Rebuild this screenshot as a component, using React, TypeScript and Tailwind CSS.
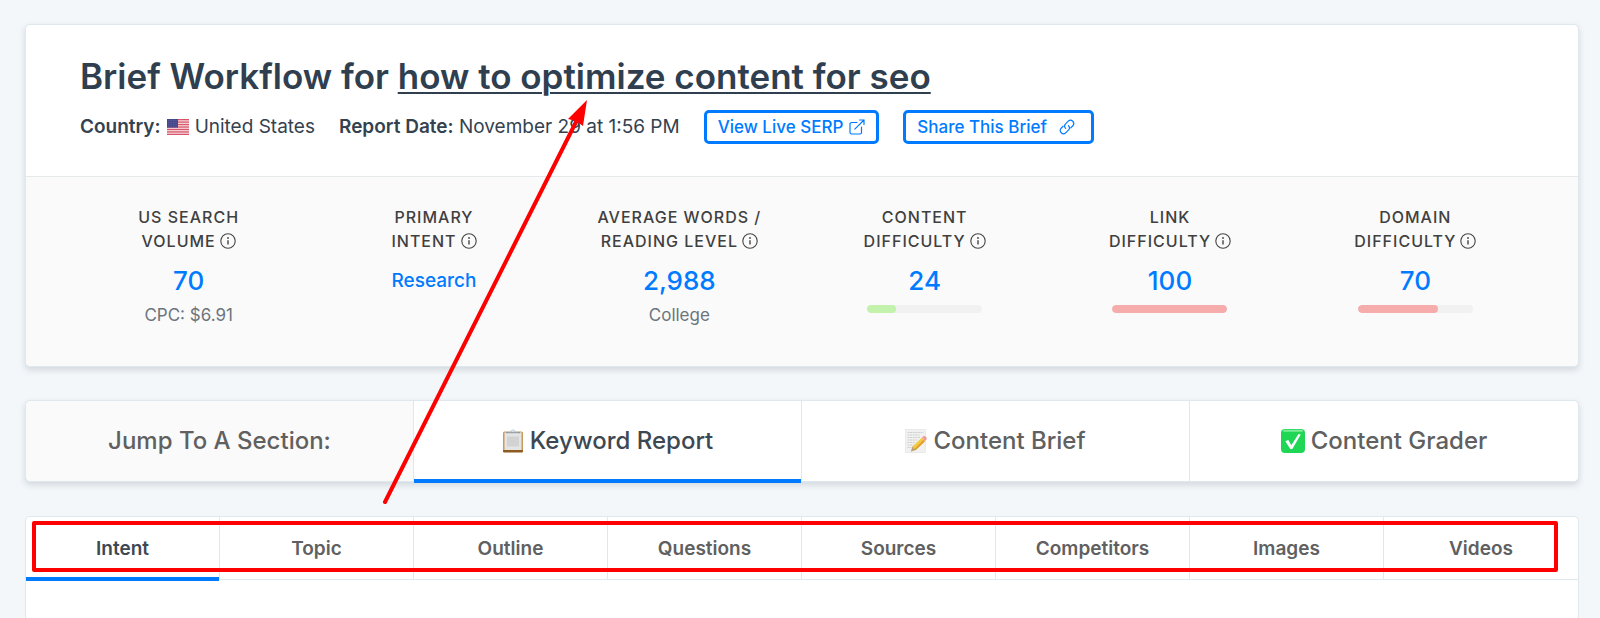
import type { ReactNode } from 'react';

type Stat = {
  label: [string, string];
  value: string;
  small?: boolean;
  note?: string;
  bar?: { percent: number; color: string };
};

const stats: Stat[] = [
  { label: ['US Search', 'Volume'], value: '70', note: 'CPC: $6.91' },
  { label: ['Primary', 'Intent'], value: 'Research', small: true },
  { label: ['Average Words /', 'Reading Level'], value: '2,988', note: 'College' },
  { label: ['Content', 'Difficulty'], value: '24', bar: { percent: 25, color: 'bg-[#c3f2ac]' } },
  { label: ['Link', 'Difficulty'], value: '100', bar: { percent: 100, color: 'bg-[#f7acac]' } },
  { label: ['Domain', 'Difficulty'], value: '70', bar: { percent: 70, color: 'bg-[#f7acac]' } },
];

const sections = ['Intent', 'Topic', 'Outline', 'Questions', 'Sources', 'Competitors', 'Images', 'Videos'];

function InfoIcon() {
  return (
    <svg viewBox="0 0 16 16" className="inline-block size-4 -mt-1 ml-1" fill="none" stroke="#444" strokeWidth="1.1">
      <circle cx="8" cy="8" r="7.2" />
      <path d="M8 7.2v4.2" strokeWidth="1.4" />
      <circle cx="8" cy="5" r="0.9" fill="#444" stroke="none" />
    </svg>
  );
}

function FlagIcon() {
  return (
    <svg viewBox="0 0 22 16" className="h-4 w-[22px]">
      <rect width="22" height="16" fill="#f6dfe2" />
      {[0, 1, 2, 3, 4, 5, 6].map((i) => (
        <rect key={i} y={i * 2.46} width="22" height="1.3" fill="#d9566a" />
      ))}
      <rect width="11" height="8.6" fill="#45488a" />
      {[1.5, 3.4, 5.3, 7.2].map((y) => (
        <path key={y} d={`M1 ${y}h9.5`} stroke="#6f73a8" strokeWidth="0.6" strokeDasharray="0.7 1" />
      ))}
    </svg>
  );
}

function ExternalIcon() {
  return (
    <svg viewBox="0 0 16 16" className="size-4" fill="none" stroke="currentColor" strokeWidth="1.2" strokeLinecap="round" strokeLinejoin="round">
      <path d="M8 3.500H2.600c-.9 0-1.600.7-1.600 1.500v8.500c0 .9.7 1.500 1.500 1.500H11c.9 0 1.500-.7 1.500-1.500V8" />
      <path d="M10.500 1H15v4.500M15 1 5.800 10.200" />
    </svg>
  );
}

function LinkIcon() {
  return (
    <svg viewBox="0 0 16 16" className="size-4" fill="none" stroke="currentColor" strokeWidth="1.2" strokeLinecap="round">
      <path d="M6.600 9.400a3.300 3.300 0 0 1 0-4.600l2.900-2.900a3.300 3.300 0 0 1 4.600 4.600l-2.300 2.300" />
      <path d="M9.400 6.600a3.300 3.300 0 0 1 0 4.600l-2.900 2.900a3.300 3.300 0 0 1-4.600-4.600l2.300-2.300" />
    </svg>
  );
}

function ClipboardIcon() {
  return (
    <svg viewBox="0 0 22 24" className="h-6 w-[22px]">
      <rect x="1" y="2.500" width="20" height="20.500" rx="1.500" fill="#c99a5b" />
      <rect x="1" y="21" width="20" height="2.500" rx="1" fill="#8d5a20" />
      <rect x="2.500" y="3.500" width="17" height="17.500" fill="#e4e4e4" />
      <rect x="5" y="7.500" width="12" height="10" fill="#d2d2d2" />
      <path d="M4 3h14v1.200H4z" fill="#8f969c" />
      <path d="M6 3.200c0-.8 1.200-1.200 2.800-1.200.6-2 3.800-2 4.400 0 1.600 0 2.800.4 2.800 1.200z" fill="#c3cdd6" />
      <circle cx="11" cy="1.900" r="0.700" fill="#fff" />
    </svg>
  );
}

function MemoIcon() {
  return (
    <svg viewBox="0 0 22 24" className="h-6 w-[22px]">
      <rect x="0.500" y="0.500" width="20" height="23" fill="#f1f1f0" stroke="#e2e2e2" strokeWidth="0.600" />
      <path d="M2.500 3.500h16M2.500 6h12M2.500 8.500h13M2.500 11h10M2.500 13.500h8M2.500 16h6M2.500 18.500h4" stroke="#c6c6c6" strokeWidth="0.800" strokeDasharray="2 0.600" />
      <path d="m6 22.500 1.500-5L17 8.500l3 3.500-9.500 9z" fill="#f6c944" />
      <path d="m9 20.500 9.500-9.500 1.500 1.200-9.500 9z" fill="#dd9c26" />
      <path d="m6 22.500 1.500-5 3 3.500z" fill="#b9a27c" />
      <path d="m17 8.500 1.500-1.300c1.500-.8 4 1.500 3 3.300L20 12z" fill="#f09a9c" />
    </svg>
  );
}

function CheckIcon() {
  return (
    <svg viewBox="0 0 24 24" className="size-6">
      <rect width="24" height="24" rx="4" fill="#1fd655" />
      <path d="M3 1.800h18" stroke="#7deb98" strokeWidth="2" strokeLinecap="round" />
      <path d="M4.300 12.200 7.300 11l3 5.300L17.500 5l2.300.6L11.300 20h-2z" fill="#fff" />
    </svg>
  );
}

function MainTab({ icon, children, active }: { icon: ReactNode; children: ReactNode; active?: boolean }) {
  return (
    <button
      type="button"
      className={
        active
          ? 'relative flex items-center justify-center gap-1.5 border-r border-[#dfe8ec] text-[#3d4852] after:absolute after:inset-x-0 after:-bottom-0.5 after:h-1 after:bg-[#007bff]'
          : 'flex items-center justify-center gap-1.5 border-r border-[#dfe8ec] text-[#606060] last:border-r-0'
      }
    >
      {icon}
      {children}
    </button>
  );
}

export default function App() {
  return (
    <div className="relative flex min-h-screen flex-col overflow-hidden bg-[#f3f7fa] pt-6 pr-[21px] pl-[25px] font-['Inter',sans-serif]">
      <section className="rounded-[5px] border border-[#dfe8ec] bg-white shadow-[0_3px_6px_rgba(60,80,90,0.18)]">
        <header className="border-b border-[#e6e9ea] px-[54px] pt-[27px] pb-8">
          <h1 className="text-[35px] leading-12 font-semibold text-[#2f3f50]">
            Brief Workflow for <span className="underline decoration-2 underline-offset-3">how to optimize content for seo</span>
          </h1>
          <div className="mt-2.5 flex items-center gap-6 text-[19px] leading-8 text-[#34424f]">
            <p className="flex items-center gap-1.5">
              <strong className="font-semibold">Country:</strong>
              <FlagIcon />
              United States
            </p>
            <p>
              <strong className="font-semibold">Report Date:</strong> November 29 at 1:56 PM
            </p>
            <a href="#serp" className="flex h-[34px] items-center gap-1.5 rounded-[5px] border-[3px] border-[#007bff] px-[11px] text-[17px] font-medium text-[#007bff]">
              View Live SERP <ExternalIcon />
            </a>
            <button type="button" className="flex h-[34px] items-center gap-3 rounded-[5px] border-[3px] border-[#007bff] pr-4 pl-[11px] text-[17px] font-medium text-[#007bff]">
              Share This Brief <LinkIcon />
            </button>
          </div>
        </header>
        <div className="grid grid-cols-6 rounded-b-[5px] bg-[#fafafa] px-10 pt-7 pb-[37px] text-center">
          {stats.map((stat) => (
            <div key={stat.label.join(' ')}>
              <h2 className="text-base leading-6 font-medium tracking-[1px] text-[#404040] uppercase">
                {stat.label[0]}
                <br />
                {stat.label[1]}
                <InfoIcon />
              </h2>
              <p className={stat.small ? 'mt-3 text-[19px] leading-8 font-medium text-[#007bff]' : 'mt-3 text-[26px] leading-8 font-medium text-[#007bff]'}>
                {stat.value}
              </p>
              {stat.note && <p className="mt-1 text-[17px] leading-7 text-[#6c757d]">{stat.note}</p>}
              {stat.bar && (
                <div className="mx-auto mt-2 h-2 w-[115px] overflow-hidden rounded-full bg-[#f1f1f1]">
                  <div className={`h-full rounded-full ${stat.bar.color}`} style={{ width: `${stat.bar.percent}%` }} />
                </div>
              )}
            </div>
          ))}
        </div>
      </section>

      <nav className="mt-[33px] grid h-[82px] grid-cols-4 rounded-[5px] border border-[#dfe8ec] bg-white text-2xl font-medium shadow-[0_3px_6px_rgba(60,80,90,0.18)]">
        <div className="flex items-center justify-center rounded-l-[5px] border-r border-[#dfe8ec] bg-[#fafafa] text-[#606060]">
          Jump To A Section:
        </div>
        <MainTab icon={<ClipboardIcon />} active>
          Keyword Report
        </MainTab>
        <MainTab icon={<MemoIcon />}>Content Brief</MainTab>
        <MainTab icon={<CheckIcon />}>Content Grader</MainTab>
      </nav>

      <section className="mt-[34px] flex-1 rounded-t-[5px] border border-b-0 border-[#dfe8ec] bg-white">
        <nav className="grid h-[63px] grid-cols-8 border-b border-[#dfe8ec] text-[19px] font-semibold">
          {sections.map((name, i) => (
            <button
              key={name}
              type="button"
              className={
                i === 0
                  ? 'relative border-r border-[#dfe8ec] pt-0.5 text-[#3d4852] after:absolute after:inset-x-0 after:-bottom-0.5 after:h-1 after:bg-[#007bff]'
                  : 'border-r border-[#dfe8ec] pt-0.5 text-[#606060] last:border-r-0'
              }
            >
              {name}
            </button>
          ))}
        </nav>
      </section>

      {/* Annotation over the page */}
      <svg viewBox="0 0 1600 618" className="pointer-events-none absolute top-0 left-0 h-[618px] w-[1600px]" fill="none" stroke="#f00" strokeWidth="4" strokeLinecap="round" strokeLinejoin="round">
        <rect x="34" y="523" width="1522" height="47" />
        <path d="M385 502 577 120" />
        <path d="M587 100 568 119 576 121 583 126z" fill="#f00" stroke="none" />
      </svg>
    </div>
  );
}
